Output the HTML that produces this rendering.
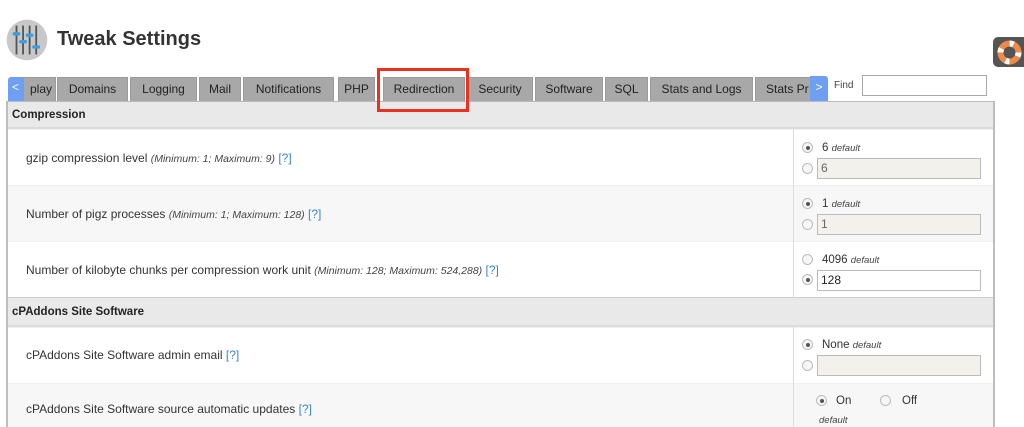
<!DOCTYPE html>
<html><head><meta charset="utf-8"><style>
*{margin:0;padding:0;box-sizing:border-box}
body{width:1024px;height:427px;overflow:hidden;background:#fff;font-family:"Liberation Sans",sans-serif;color:#333;position:relative}
.a{position:absolute}
.tab{position:absolute;top:77px;height:24px;background:#a8a8a8;border:1px solid #9a9a9a;border-bottom:none;font-size:12px;line-height:23px;text-align:center;color:#222;overflow:hidden;white-space:nowrap}
.row{position:absolute;left:8px;width:985px;border-top:1px solid #f0f0f0}
.lbl{position:absolute;left:26px;font-size:12px;color:#333}
.lbl i{font-size:10.5px;color:#444}
.lbl b{font-weight:normal;color:#3a86c8}
.hdr{position:absolute;left:8px;width:985px;background:#e9e9e9;font-size:11.5px;font-weight:bold;color:#222;padding-left:4px;border-top:1px solid #d0d0d0;border-bottom:2px solid #dcdcdc}
.rad{position:absolute;width:11px;height:11px;border-radius:50%;border:1px solid #bbb;background:#f6f6f6}
.rad.on::after{content:"";position:absolute;left:2.5px;top:2.5px;width:4px;height:4px;border-radius:50%;background:#555}
.inp{position:absolute;left:817px;width:164px;height:21px;border:1px solid #bbb;background:#f2f1ec;font-size:12px;line-height:19px;padding-left:3px;color:#666}
.val{position:absolute;font-size:11.5px;color:#333}
.val i{font-size:9.5px;color:#444}
</style></head><body>
<svg class="a" style="left:6px;top:19px" width="42" height="42" viewBox="0 0 32 32">
<circle cx="16" cy="16" r="15.5" fill="#c8c8c8"/>
<g stroke="#555" stroke-width="1.4"><line x1="8" y1="5" x2="8" y2="27"/><line x1="13" y1="5" x2="13" y2="27"/><line x1="18" y1="5" x2="18" y2="27"/><line x1="23" y1="5" x2="23" y2="27"/></g>
<g fill="#3a9ee0"><rect x="5" y="10" width="6" height="2.6" rx="1.3"/><rect x="10" y="16" width="6" height="2.6" rx="1.3"/><rect x="15" y="11" width="6" height="2.6" rx="1.3"/><rect x="20" y="20" width="6" height="2.6" rx="1.3"/></g>
</svg>
<div class="a" style="left:57px;top:28px;font-size:20px;font-weight:bold;color:#333">Tweak Settings</div>
<div class="a" style="left:993px;top:37px;width:31px;height:30px;background:#555;border-radius:5px 0 0 5px"></div>
<svg class="a" style="left:997px;top:40px" width="25" height="25" viewBox="0 0 25 25"><circle cx="12.5" cy="12.5" r="9" fill="none" stroke="#f08a4b" stroke-width="6"/><g stroke="#fff" stroke-width="6" fill="none" stroke-dasharray="4 10.1"><circle cx="12.5" cy="12.5" r="9"/></g><circle cx="12.5" cy="12.5" r="4" fill="#555"/></svg>

<div class="a" style="left:8px;top:77px;width:15px;height:24px;background:#6f9ff3;border-radius:3px 0 0 0;color:#fff;font-size:12px;line-height:20px;text-align:center">&lt;</div>
<div class="tab" style="left:23px;width:33px;text-align:right;padding-right:3px">play</div>
<div class="tab" style="left:57px;width:71px">Domains</div>
<div class="tab" style="left:130px;width:67px">Logging</div>
<div class="tab" style="left:199px;width:42px">Mail</div>
<div class="tab" style="left:243px;width:91px">Notifications</div>
<div class="tab" style="left:338px;width:37px">PHP</div>
<div class="tab" style="left:383px;width:82px">Redirection</div>
<div class="tab" style="left:467px;width:66px">Security</div>
<div class="tab" style="left:535px;width:68px">Software</div>
<div class="tab" style="left:605px;width:43px">SQL</div>
<div class="tab" style="left:650px;width:103px">Stats and Logs</div>
<div class="tab" style="left:755px;width:56px;text-align:left;padding-left:10px">Stats Pr</div>
<div class="a" style="left:810px;top:76px;width:18px;height:25px;background:#6f9ff3;border-radius:0 3px 0 0;color:#fff;font-size:12px;line-height:22px;text-align:center">&gt;</div>
<div class="a" style="left:834px;top:80px;font-size:10px;color:#444">Find</div>
<div class="a" style="left:862px;top:75px;width:125px;height:21px;border:1px solid #aaa"></div>

<div class="a" style="left:6px;top:101px;width:2px;height:326px;background:#bdbdbd"></div>
<div class="a" style="left:993px;top:101px;width:2px;height:326px;background:#bdbdbd"></div>
<div class="hdr" style="top:101px;height:28px;line-height:26px;border-top-color:#bbb">Compression</div>
<div class="row" style="top:129px;height:56px;background:#fff"></div>
<div class="row" style="top:185px;height:56px;background:#f7f7f7"></div>
<div class="row" style="top:241px;height:56px;background:#fff"></div>
<div class="hdr" style="top:297px;height:30px;line-height:28px">cPAddons Site Software</div>
<div class="row" style="top:327px;height:56px;background:#fff"></div>
<div class="row" style="top:383px;height:44px;background:#f7f7f7"></div>
<div class="a" style="left:793px;top:129px;width:1px;height:168px;background:#ddd"></div>
<div class="a" style="left:793px;top:327px;width:1px;height:100px;background:#ddd"></div>
<div class="a" style="left:377px;top:68px;width:92px;height:44px;border:3px solid #e8321f;z-index:5"></div>

<div class="lbl" style="top:151px">gzip compression level <i>(Minimum: 1; Maximum: 9)</i> <b>[?]</b></div>
<div class="lbl" style="top:207px">Number of pigz processes <i>(Minimum: 1; Maximum: 128)</i> <b>[?]</b></div>
<div class="lbl" style="top:263px">Number of kilobyte chunks per compression work unit <i>(Minimum: 128; Maximum: 524,288)</i> <b>[?]</b></div>
<div class="lbl" style="top:348px">cPAddons Site Software admin email <b>[?]</b></div>
<div class="lbl" style="top:402px">cPAddons Site Software source automatic updates <b>[?]</b></div>

<div class="rad on" style="left:802px;top:142px"></div><div class="val" style="left:822px;top:142px">6 <i>default</i></div>
<div class="rad" style="left:802px;top:163px"></div><div class="inp" style="top:158px">6</div>
<div class="rad on" style="left:802px;top:198px"></div><div class="val" style="left:822px;top:198px">1 <i>default</i></div>
<div class="rad" style="left:802px;top:219px"></div><div class="inp" style="top:214px">1</div>
<div class="rad" style="left:802px;top:254px"></div><div class="val" style="left:822px;top:254px">4096 <i>default</i></div>
<div class="rad on" style="left:802px;top:274px"></div><div class="inp" style="top:270px;background:#fff;color:#222">128</div>
<div class="rad on" style="left:802px;top:339px"></div><div class="val" style="left:822px;top:339px">None <i>default</i></div>
<div class="rad" style="left:802px;top:360px"></div><div class="inp" style="top:355px"></div>
<div class="rad on" style="left:816px;top:395px"></div><div class="val" style="left:836px;top:395px">On</div>
<div class="rad" style="left:880px;top:395px"></div><div class="val" style="left:902px;top:395px">Off</div>
<div class="val" style="left:819px;top:414px"><i>default</i></div>
</body></html>
